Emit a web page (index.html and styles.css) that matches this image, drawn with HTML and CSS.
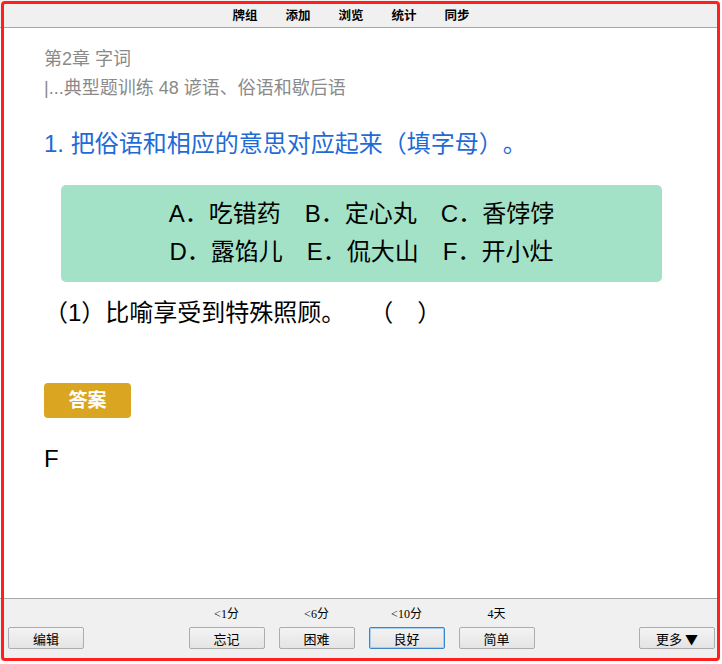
FILE: index.html
```html
<!DOCTYPE html>
<html lang="zh-CN">

<head>
    <meta charset="UTF-8">
    <meta name="viewport" content="width=device-width, initial-scale=1.0">
    <title>复习</title>
    <link rel="stylesheet" href="styles.css">
</head>

<body>
    <div class="app">
        <div class="topbar">
            <a class="nav-item">牌组</a>
            <a class="nav-item">添加</a>
            <a class="nav-item">浏览</a>
            <a class="nav-item">统计</a>
            <a class="nav-item">同步</a>
        </div>

        <div class="card">
            <div class="crumbs">
                <div>第2章 字词</div>
                <div>|...典型题训练 48 谚语、俗语和歇后语</div>
            </div>

            <div class="question">1. 把俗语和相应的意思对应起来（填字母）。</div>

            <div class="options">
                <div>A．吃错药　B．定心丸　C．香饽饽</div>
                <div>D．露馅儿　E．侃大山　F．开小灶</div>
            </div>

            <div class="sub-question">（1）比喻享受到特殊照顾。　（　）</div>

            <div class="answer-tag">答案</div>

            <div class="answer">F</div>
        </div>

        <div class="bottombar">
            <button class="btn">编辑</button>

            <div class="ease-group">
                <div class="ease">
                    <span class="ease-time">&lt;1分</span>
                    <button class="btn">忘记</button>
                </div>
                <div class="ease">
                    <span class="ease-time">&lt;6分</span>
                    <button class="btn">困难</button>
                </div>
                <div class="ease">
                    <span class="ease-time">&lt;10分</span>
                    <button class="btn btn-focus">良好</button>
                </div>
                <div class="ease">
                    <span class="ease-time">4天</span>
                    <button class="btn">简单</button>
                </div>
            </div>

            <button class="btn">更多 ▼</button>
        </div>

        <div class="frame"></div>
    </div>
</body>

</html>
```

FILE: styles.css
```css
body {
    margin: 0;
    padding: 0;
    background-color: white;
    font-family: "Liberation Sans", "Noto Sans CJK SC", sans-serif;
    text-spacing-trim: space-all;
}

.app {
    position: relative;
    width: 720px;
    height: 661px;
    display: flex;
    flex-direction: column;
}

/* red outline drawn over the whole window */
.frame {
    position: absolute;
    top: 1px;
    left: 1px;
    width: 719px;
    height: 660px;
    border: 3px solid #ff1f1f;
    border-radius: 4px;
    box-sizing: border-box;
    pointer-events: none;
}

.topbar {
    height: 28px;
    background-color: #f0f0f0;
    border-bottom: 1px solid #a8a8a8;
    display: flex;
    justify-content: center;
    align-items: center;
    gap: 28px;
    padding-right: 18px;
    padding-top: 1px;
    box-sizing: border-box;
    flex-shrink: 0;
}

.nav-item {
    font-family: "Noto Sans CJK SC", sans-serif;
    font-size: 12.5px;
    font-weight: bold;
    color: black;
}

.card {
    flex: 1;
    padding: 17px 41px 0 44px;
}

.crumbs {
    font-size: 18px;
    line-height: 29px;
    color: #8a8a8a;
}

.question {
    margin-top: 25px;
    font-size: 24px;
    line-height: 32px;
    color: #1f6bd6;
}

.options {
    margin: 25px 17px 0 17px;
    padding: 10px 0 11px 0;
    background-color: #a3e2c6;
    border-radius: 5px;
    text-align: center;
    font-size: 24px;
    line-height: 38px;
    color: black;
}

.sub-question {
    margin-top: 15px;
    font-size: 24px;
    line-height: 32px;
    color: black;
}

.answer-tag {
    margin-top: 54px;
    width: 87px;
    height: 35px;
    line-height: 35px;
    background-color: #daa520;
    border-radius: 4px;
    color: white;
    font-size: 19px;
    font-weight: bold;
    text-align: center;
}

.answer {
    margin-top: 26px;
    font-size: 24px;
    line-height: 30px;
    color: black;
}

.bottombar {
    height: 63px;
    background-color: #f0f0f0;
    border-top: 1px solid #a8a8a8;
    display: flex;
    justify-content: space-between;
    align-items: flex-end;
    padding: 0 5px 12px 8px;
    box-sizing: border-box;
    flex-shrink: 0;
}

.ease-group {
    display: flex;
    gap: 14px;
}

.ease {
    display: flex;
    flex-direction: column;
    align-items: center;
    gap: 5px;
}

.ease-time {
    font-family: "Liberation Serif", "Noto Sans CJK SC", serif;
    font-size: 12px;
    line-height: 15px;
    color: black;
}

.btn {
    width: 76px;
    height: 22px;
    padding: 0;
    border: 1px solid #adadad;
    border-radius: 2px;
    background: linear-gradient(#f3f3f3, #e4e4e4);
    font-family: "Noto Sans CJK SC", sans-serif;
    font-size: 13px;
    color: black;
    box-sizing: border-box;
}

.btn-focus {
    border-color: #3c84cc;
    box-shadow: inset 0 0 0 1px #a8d0f2;
}
```
